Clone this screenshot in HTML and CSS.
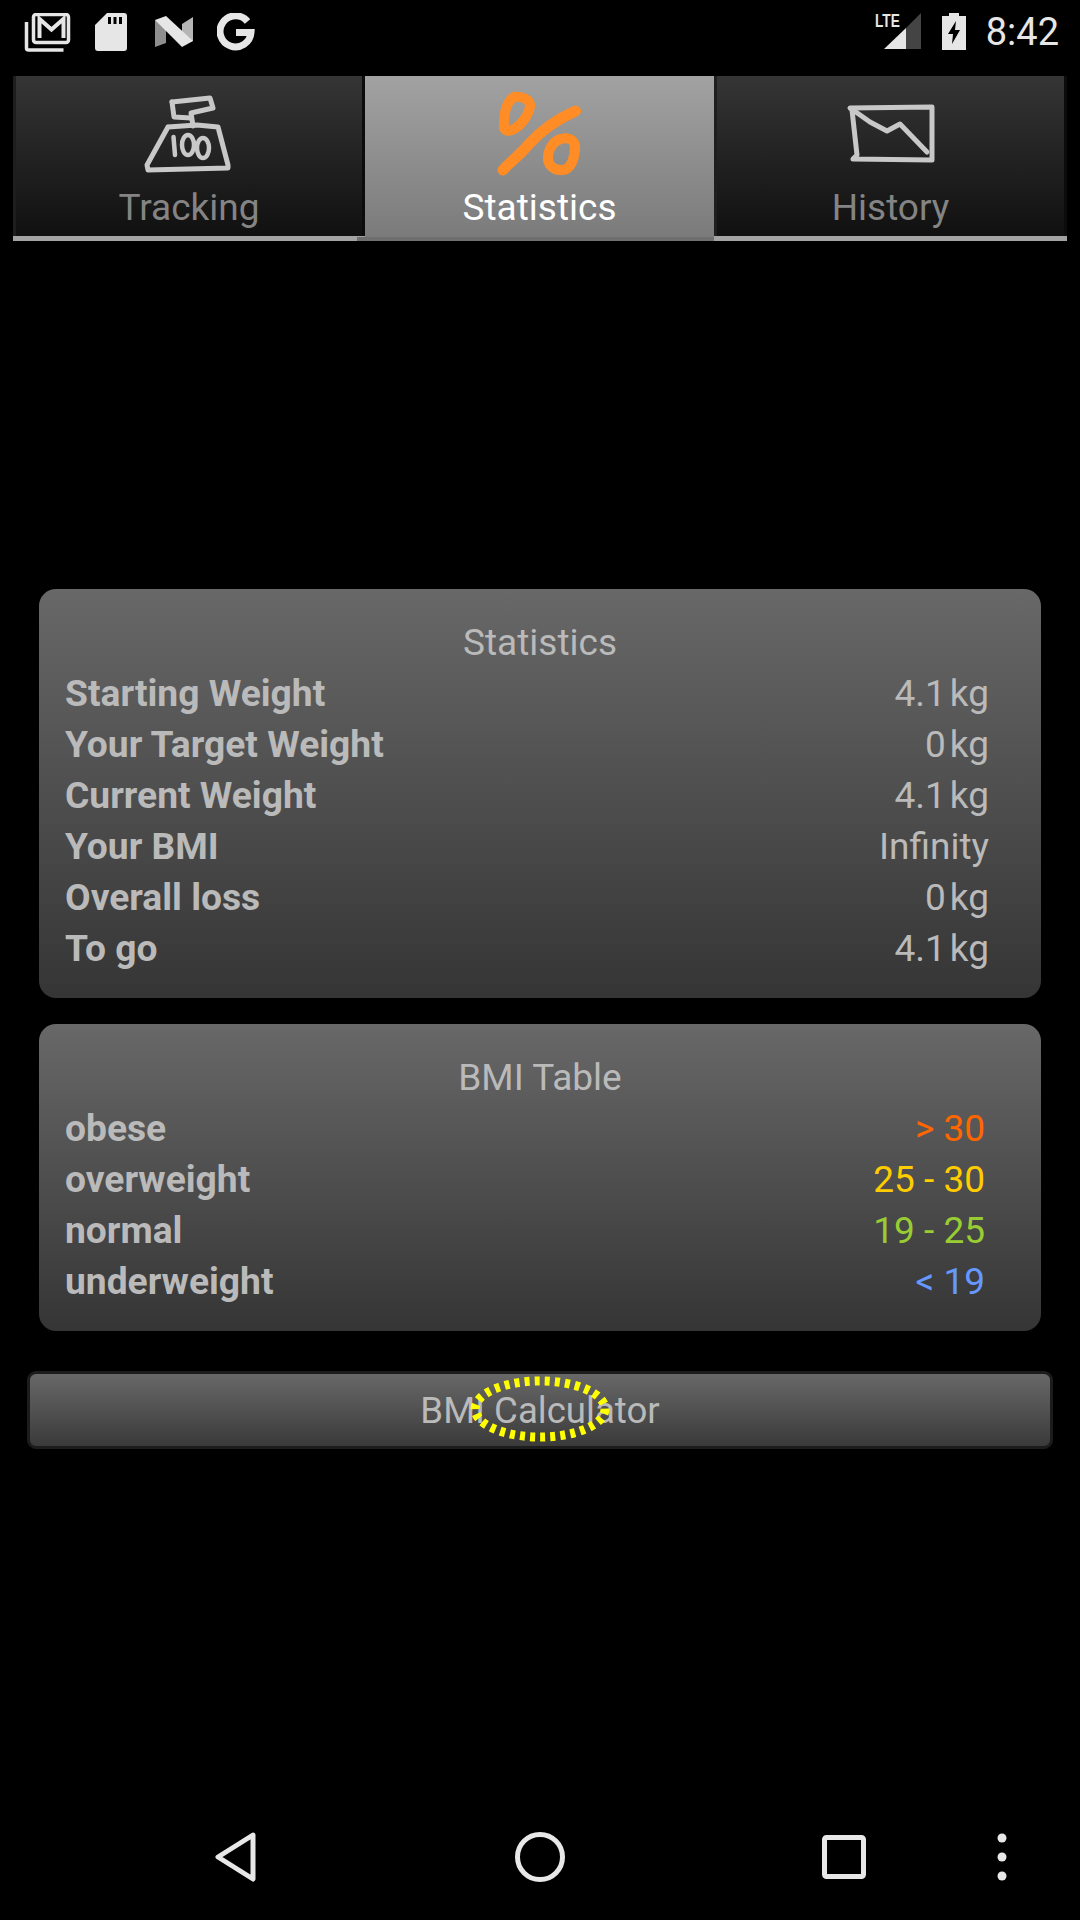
FILE: index.html
```html
<!DOCTYPE html>
<html lang="en">
<head>
<meta charset="utf-8">
<title>Statistics</title>
<link rel="stylesheet" href="styles.css">
</head>
<body>
<div class="app">
  <header class="status">
    <div class="status-left">
      <svg class="ic-gmail" width="48" height="40" viewBox="0 0 48 40">
        <path class="st-line" d="M2.500 9v26a2 2 0 0 0 2 2h35"/>
        <rect class="st-line" x="9.500" y="1.500" width="35" height="28" rx="2.500"/>
        <path class="st-line3" d="M15.500 25V6l12 10.500L39.500 6v19"/>
      </svg>
      <svg class="ic-sd" width="32" height="38" viewBox="0 0 32 38">
        <path class="st-fill" fill-rule="evenodd" d="M12 0h17a3 3 0 0 1 3 3v32a3 3 0 0 1-3 3H3a3 3 0 0 1-3-3V12zM13 4v7h3V4zM18.500 4v7h3V4zM24 4v7h3V4z"/>
      </svg>
      <svg class="ic-n" width="39" height="32" viewBox="0 0 39 32">
        <path class="n-dark" d="M0 4l11 5v18L0 31z"/>
        <path class="n-mid" d="M27 8L38 1v24l-11 3z"/>
        <path class="st-fill" d="M0 4L11 0l27 25-11 6z"/>
      </svg>
      <svg class="ic-g" width="38" height="38" viewBox="0 0 38 38">
        <path class="g-stroke" d="M30.500 8.500A15.500 15.500 0 1 0 34 19.500H19"/>
      </svg>
    </div>
    <div class="status-right">
      <div class="signal">
        <span class="lte">LTE</span>
        <svg width="37" height="37" viewBox="0 0 37 37">
          <path class="sig-dark" d="M22 15L37 0v36H22z"/>
          <path class="st-fill" d="M22 15v21H0z"/>
        </svg>
      </div>
      <svg class="ic-batt" width="24" height="37" viewBox="0 0 24 37">
        <path class="st-fill" fill-rule="evenodd" d="M7 0h10v3h7v34H0V3h7zM14 8L6 21h5l-1 10 8-14h-5z"/>
      </svg>
      <span class="clock">8:42</span>
    </div>
  </header>

  <nav class="tabs">
    <div class="tab">
      <svg class="tab-icon" width="90" height="90" viewBox="0 0 90 90">
        <g class="draw">
          <path d="M28 12L66 8l3 10-22 5 2 13"/>
          <path d="M28 12l2 15 17 1"/>
          <path d="M24 37L3 75l1 5 80-2v-3l-10-38-21-2-29 2"/>
          <path class="thin" d="M29.500 47L31 65"/>
          <ellipse class="thin" cx="44" cy="55" rx="6" ry="10"/>
          <ellipse class="thin" cx="59" cy="58" rx="6" ry="10"/>
        </g>
      </svg>
      <span class="tab-label">Tracking</span>
    </div>
    <div class="tab tab-active">
      <svg class="tab-icon" width="90" height="90" viewBox="0 0 90 90">
        <g class="pct">
          <path d="M19 7C28 6 36 10 35 17 33 26 26 36 17 40 12 42 8 40 9 34 9 24 11 12 19 7z"/>
          <path class="slash" d="M80.500 21C60 30 45 42 34 54 25 65 15 72 8 80"/>
          <path d="M66 49C74 47 80 50 80 57 80 68 76 79 68 80 58 81 52 74 53 66 54 57 60 50 66 49z"/>
        </g>
      </svg>
      <span class="tab-label">Statistics</span>
    </div>
    <div class="tab">
      <svg class="tab-icon" width="90" height="90" viewBox="0 0 90 90">
        <g class="draw">
          <path d="M4 18l82-1v53l-79-1 4-4-5-45z"/>
          <path d="M7 20l17 12 17 9 13-7 27 28"/>
        </g>
      </svg>
      <span class="tab-label">History</span>
    </div>
  </nav>

  <main class="content">
    <section class="card">
      <h2 class="card-title">Statistics</h2>
      <div class="row"><span class="row-name">Starting Weight</span><span class="row-val">4.1<span class="unit">kg</span></span></div>
      <div class="row"><span class="row-name">Your Target Weight</span><span class="row-val">0<span class="unit">kg</span></span></div>
      <div class="row"><span class="row-name">Current Weight</span><span class="row-val">4.1<span class="unit">kg</span></span></div>
      <div class="row"><span class="row-name">Your BMI</span><span class="row-val">Infinity</span></div>
      <div class="row"><span class="row-name">Overall loss</span><span class="row-val">0<span class="unit">kg</span></span></div>
      <div class="row"><span class="row-name">To go</span><span class="row-val">4.1<span class="unit">kg</span></span></div>
    </section>
    <section class="card card-bmi">
      <h2 class="card-title">BMI Table</h2>
      <div class="row"><span class="row-name">obese</span><span class="row-val val-orange">&gt; 30</span></div>
      <div class="row"><span class="row-name">overweight</span><span class="row-val val-yellow">25 - 30</span></div>
      <div class="row"><span class="row-name">normal</span><span class="row-val val-green">19 - 25</span></div>
      <div class="row"><span class="row-name">underweight</span><span class="row-val val-blue">&lt; 19</span></div>
    </section>
    <div class="button-wrap">
      <button class="calc-btn" type="button">BMI Calculator</button>
      <svg class="touch-mark" width="150" height="74" viewBox="0 0 150 74">
        <ellipse cx="75" cy="37" rx="65" ry="28"/>
      </svg>
    </div>
  </main>

  <footer class="navbar">
    <svg width="44" height="52" viewBox="0 0 44 52"><path class="nav-line" d="M39 4L4 26l35 22z"/></svg>
    <svg width="50" height="50" viewBox="0 0 50 50"><circle class="nav-line" cx="25" cy="25" r="22.500"/></svg>
    <svg width="44" height="44" viewBox="0 0 44 44"><rect class="nav-line" x="2.500" y="2.500" width="39" height="39" rx="2"/></svg>
    <svg width="10" height="48" viewBox="0 0 10 48"><circle class="nav-dot" cx="5" cy="5" r="4.500"/><circle class="nav-dot" cx="5" cy="24" r="4.500"/><circle class="nav-dot" cx="5" cy="43" r="4.500"/></svg>
  </footer>
</div>
</body>
</html>
```

FILE: styles.css
```css
* { box-sizing: border-box; }
html, body { margin: 0; padding: 0; background: #000; }
body { font-family: Roboto, "Liberation Sans", sans-serif; }

.app {
  width: 1080px;
  height: 1920px;
  display: flex;
  flex-direction: column;
  overflow: hidden;
  background: #000;
}

/* status bar */
.status {
  height: 76px;
  flex: none;
  display: flex;
  justify-content: space-between;
  padding: 13px 21px 0 24px;
}
.status-left { display: flex; align-items: flex-start; gap: 27px; }
.status-right { display: flex; align-items: flex-start; }
.ic-gmail { margin-right: -4px; }
.ic-sd { margin-right: 1px; }
.ic-n { margin-top: 3px; margin-right: -4px; }
.st-fill { fill: #e6e6e6; }
.st-line { fill: none; stroke: #e6e6e6; stroke-width: 3.500; }
.st-line3 { fill: none; stroke: #e6e6e6; stroke-width: 4; }
.n-dark { fill: #8e8e8e; }
.n-mid { fill: #b5b5b5; }
.g-stroke { fill: none; stroke: #e6e6e6; stroke-width: 7; }
.sig-dark { fill: #444; }
.signal { position: relative; width: 37px; height: 37px; margin-right: 21px; }
.lte {
  position: absolute;
  left: -9px;
  top: 0;
  font: 700 19px/16px "Liberation Sans", sans-serif;
  color: #e6e6e6;
  transform: scaleX(.72);
  transform-origin: left top;
}
.clock {
  margin-left: 20px;
  margin-top: -3px;
  font-size: 38px;
  line-height: 44px;
  color: #e6e6e6;
}

/* tabs */
.tabs {
  flex: none;
  display: grid;
  grid-template-columns: 352px 349px 353px;
  margin: 0 13px;
  height: 165px;
}
.tab {
  position: relative;
  display: flex;
  flex-direction: column;
  align-items: center;
  padding-top: 14px;
  background: linear-gradient(#353535, #101010);
  border-bottom: 5px solid #a3a3a3;
  box-shadow: inset 3px 0 0 #1e1e1e, inset -3px 0 0 #0c0c0c;
  color: #848484;
}
.tab-active {
  background: linear-gradient(#a2a2a2, #7a7a7a);
  border-bottom: 0;
  box-shadow: none;
  color: #fff;
}
.tab-active::after {
  content: "";
  position: absolute;
  left: -8px;
  right: -8px;
  bottom: 0;
  height: 4px;
  background: #6f6f6f;
}
.tab-label { font-size: 37px; line-height: 42px; margin-top: 7px; }
.tab-icon { display: block; flex: none; }
.draw { fill: none; stroke: #c8c8c8; stroke-width: 5; stroke-linejoin: round; stroke-linecap: round; }
.draw .thin { stroke-width: 4.500; }
.pct { fill: none; stroke: #ff8c24; stroke-width: 10; stroke-linejoin: round; stroke-linecap: round; }
.pct .slash { stroke-width: 11; }

/* content */
.content {
  flex: 1;
  padding: 348px 27px 0;
  display: flex;
  flex-direction: column;
}
.card {
  margin: 0 12px 26px;
  padding: 28px 0 24px;
  border-radius: 17px;
  background: linear-gradient(#686868, #353535);
  color: #bababa;
}
.card-bmi { margin-bottom: 40px; }
.card-title {
  margin: 0;
  font-size: 37px;
  font-weight: 400;
  line-height: 51px;
  text-align: center;
}
.row {
  display: flex;
  justify-content: space-between;
  margin: 0 52px 0 26px;
  font-size: 37px;
  line-height: 51px;
}
.card-bmi .row { margin-right: 56px; }
.row-name { font-weight: 700; font-size: 37.200px; }
.unit { margin-left: 4px; }
.val-orange { color: #ff6600; }
.val-yellow { color: #ffcc00; }
.val-green { color: #99cc33; }
.val-blue { color: #6699ff; }

.button-wrap { position: relative; }
.calc-btn {
  display: block;
  width: 100%;
  height: 78px;
  padding: 2px 0 0;
  border: 3px solid #1c1c1c;
  border-radius: 9px;
  background: linear-gradient(#686868, #3a3a3a);
  color: #bababa;
  font: 400 36.600px/70px Roboto, sans-serif;
}
.touch-mark {
  position: absolute;
  left: 438px;
  top: 1px;
}
.touch-mark ellipse {
  fill: none;
  stroke: #ffff00;
  stroke-width: 9;
  stroke-dasharray: 5 5.100;
}

/* navigation bar */
.navbar {
  height: 126px;
  flex: none;
  display: grid;
  grid-template-columns: 304px 305px 305px 10px;
  align-items: center;
  padding-left: 84px;
}
.navbar svg { justify-self: start; }
.navbar svg:nth-child(1) { margin-left: 130px; }
.navbar svg:nth-child(2) { margin-left: 127px; }
.navbar svg:nth-child(3) { margin-left: 129px; }
.navbar svg:nth-child(4) { margin-left: -1px; }
.nav-line { fill: none; stroke: #e8e8e8; stroke-width: 5; stroke-linejoin: round; }
.nav-dot { fill: #e8e8e8; }
```
